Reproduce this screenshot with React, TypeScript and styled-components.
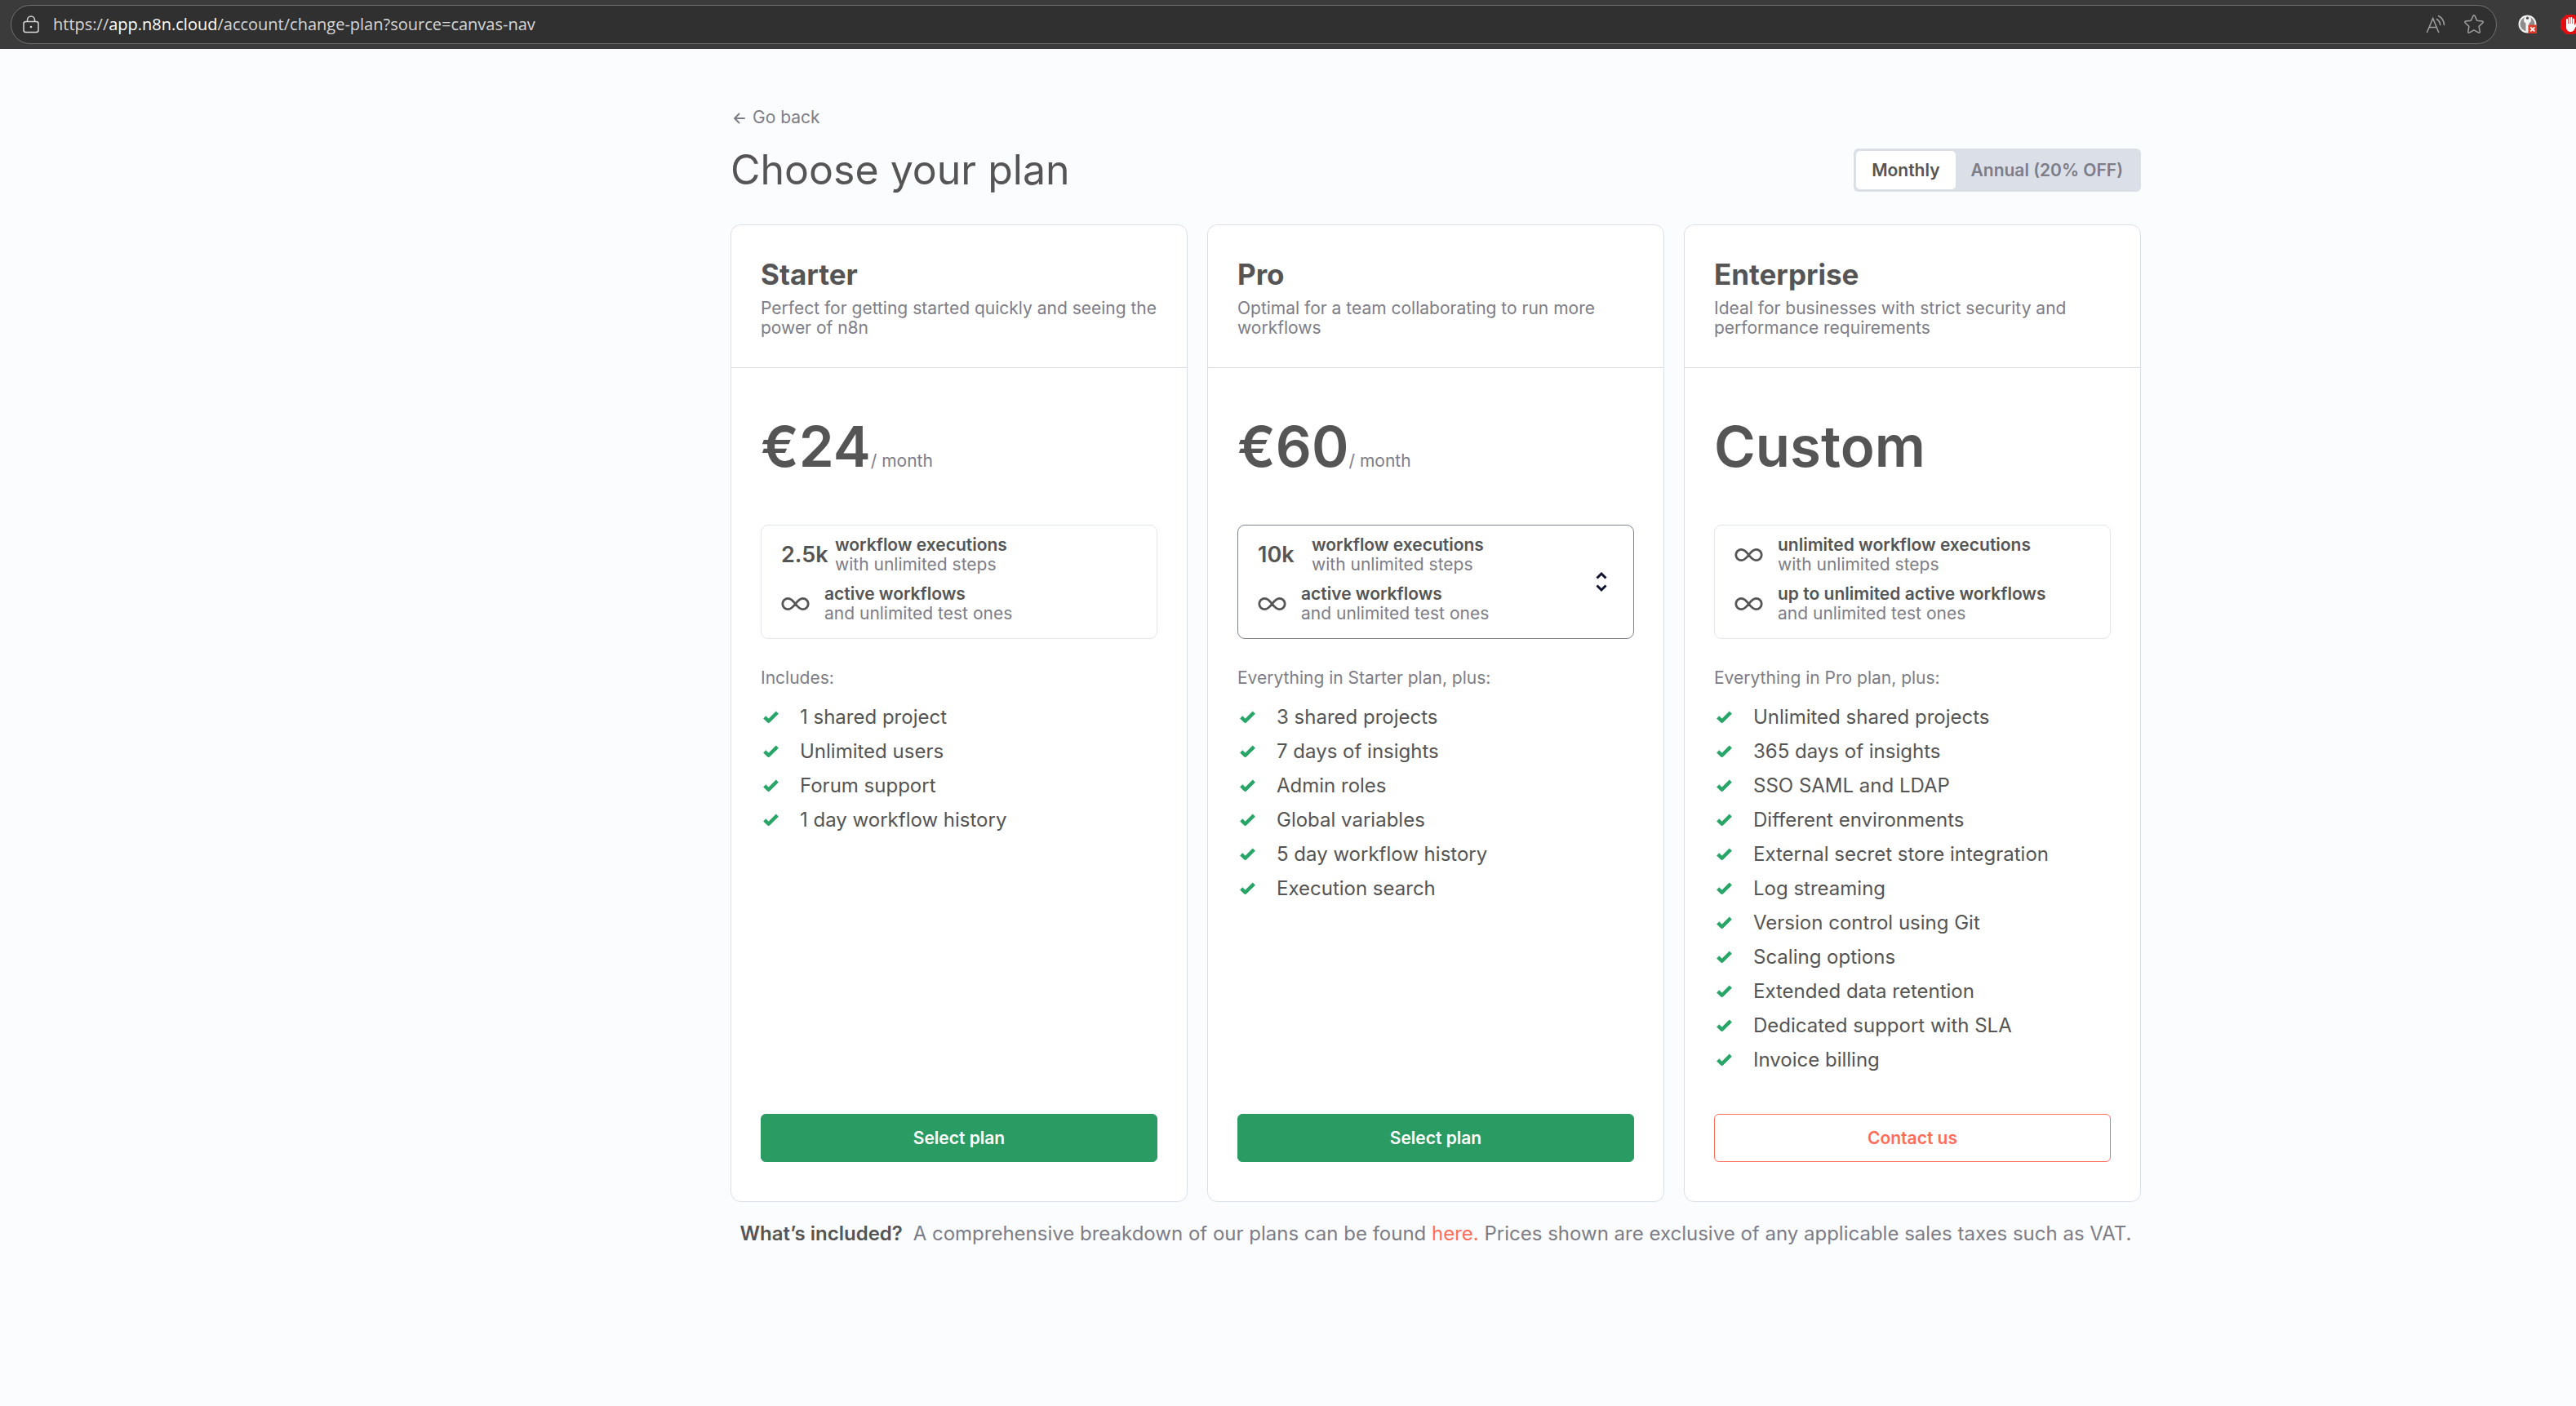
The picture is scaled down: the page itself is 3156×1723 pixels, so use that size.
import React, { useState } from "react";
import styled, { createGlobalStyle, css } from "styled-components";

const GlobalStyle = createGlobalStyle`
  *, *::before, *::after { box-sizing: border-box; }
  html, body, #root { min-height: 100vh; }
  body {
    margin: 0;
    background: #fbfcfe;
    color: #555555;
    font-family: Inter, "Liberation Sans", sans-serif;
    font-size: 21px;
    line-height: 24px;
  }
  h1, h2, p, ul { margin: 0; padding: 0; }
  button { font: inherit; color: inherit; }
`;

/* Browser bar */

const BrowserBar = styled.header`
  display: flex;
  align-items: center;
  height: 60px;
  padding-left: 13px;
  background: #3b3b3b;
  overflow: hidden;
`;

const AddressField = styled.div`
  flex: 1;
  min-width: 0;
  display: flex;
  align-items: center;
  gap: 17px;
  height: 48px;
  padding: 0 14px;
  border: 1px solid #707070;
  border-radius: 24px;
  background: #303030;
  color: #d6d6d6;
`;

const Url = styled.div`
  flex: 1;
  font-family: "Open Sans", "Noto Sans", sans-serif;
  font-size: 20px;
  line-height: 30px;
  white-space: nowrap;

  b {
    font-weight: 400;
    color: #ffffff;
  }
`;

const BarButton = styled.button`
  display: flex;
  padding: 0;
  border: 0;
  background: none;
  color: #a0a0a0;
`;

const FieldActions = styled.div`
  display: flex;
  align-items: center;
  gap: 22px;
`;

const Extensions = styled.div`
  flex: none;
  display: flex;
  align-items: center;
  gap: 28px;
  width: 97px;
  padding-left: 26px;
  overflow: hidden;

  svg {
    flex: none;
  }
`;

/* Page */

const Page = styled.div`
  display: grid;
  grid-template-columns: 895fr minmax(0, 1728px) 533fr;
  padding: 72px 0;
`;

const Main = styled.main`
  grid-column: 2;
`;

const BackLink = styled.a`
  display: inline-flex;
  align-items: center;
  gap: 8px;
  padding-left: 3px;
  color: #7d7d87;
  text-decoration: none;
  vertical-align: top;
`;

const TitleRow = styled.div`
  display: flex;
  align-items: center;
  justify-content: space-between;
  margin: 26px 0 40px;
`;

const Title = styled.h1`
  font-size: 50px;
  font-weight: 400;
  line-height: 53px;
`;

const Toggle = styled.fieldset`
  display: flex;
  margin: 0;
  padding: 3px;
  border: 0;
  border-radius: 6px;
  background: #dbdfe7;
`;

const ToggleOption = styled.label<{ $active: boolean }>`
  position: relative;
  padding: 0 19px;
  border-radius: 5px;
  background: ${(p) => (p.$active ? "#ffffff" : "transparent")};
  color: ${(p) => (p.$active ? "#555555" : "#7d7d87")};
  font-weight: 600;
  line-height: 47px;
  cursor: pointer;

  input {
    position: absolute;
    inset: 0;
    margin: 0;
    opacity: 0;
  }
`;

const Plans = styled.div`
  display: grid;
  grid-template-columns: repeat(3, minmax(0, 1fr));
  gap: 24px;
`;

const Card = styled.section`
  display: flex;
  flex-direction: column;
  border: 1px solid #dbdfe7;
  border-radius: 12px;
  background: #ffffff;
`;

const CardHeader = styled.div`
  padding: 36px;
  border-bottom: 1px solid #dbdfe7;
`;

const PlanName = styled.h2`
  margin-bottom: 6px;
  font-size: 35px;
  font-weight: 700;
  line-height: 48px;
`;

const Muted = styled.p`
  color: #7d7d87;
`;

const CardBody = styled.div`
  flex: 1;
  display: flex;
  flex-direction: column;
  padding: 36px 36px 48px;
`;

const Price = styled.div`
  display: flex;
  align-items: baseline;
  height: 120px;
  margin-bottom: 36px;
  font-size: 69px;
  font-weight: 600;
  line-height: 120px;

  small {
    color: #7d7d87;
    font-size: 21px;
    font-weight: 400;
    line-height: 24px;
  }
`;

const limitBox = css`
  display: flex;
  align-items: center;
  justify-content: space-between;
  width: 100%;
  margin-bottom: 36px;
  padding: 0 32px 0 24px;
  border-radius: 9px;
  background: #ffffff;
  text-align: left;
`;

const LimitPanel = styled.div`
  ${limitBox}
  border: 1px solid #e3e5ec;
`;

const LimitPicker = styled.button`
  ${limitBox}
  border: 1px solid #7d838f;
`;

const LimitRows = styled.span`
  display: grid;
  gap: 12px;
  padding: 12px 0 18px;
`;

const LimitRow = styled.span`
  display: flex;
  align-items: center;
`;

const Quantity = styled.span<{ $wide: boolean }>`
  display: flex;
  width: ${(p) => (p.$wide ? 66 : 53)}px;
  font-size: 27px;
  font-weight: 600;
`;

const LimitText = styled.span`
  display: grid;
  color: #7d7d87;

  strong {
    color: #555555;
    font-weight: 600;
  }
`;

const Features = styled.ul`
  flex: 1;
  margin: 15px 0 45px;
  list-style: none;
  font-size: 24px;
`;

const Feature = styled.li`
  display: flex;
  align-items: center;
  gap: 26px;
  padding-left: 3px;
  line-height: 42px;

  svg {
    flex: none;
  }
`;

const ActionButton = styled.button<{ $outline: boolean }>`
  height: 59px;
  border: 1px solid ${(p) => (p.$outline ? "#ff6d5a" : "#299b63")};
  border-radius: 6px;
  background: ${(p) => (p.$outline ? "#ffffff" : "#299b63")};
  color: ${(p) => (p.$outline ? "#ff6d5a" : "#ffffff")};
  font-weight: 600;
  cursor: pointer;
`;

const Note = styled.p`
  margin-top: 24px;
  color: #7d7d87;
  font-size: 24px;
  line-height: 30px;
  text-align: center;

  strong {
    margin-right: 6px;
    color: #555555;
    font-weight: 600;
  }

  a {
    color: #ff6d5a;
    text-decoration: none;
  }
`;

/* Drawings */

const LockIcon = () => (
  <svg width="20" height="22" viewBox="0 0 20 22" fill="none" stroke="#d6d6d6" strokeWidth="1.5">
    <rect x="1" y="7.5" width="18" height="13" rx="2.5" />
    <path d="M5.5 7.5V5.5a4.5 4.5 0 0 1 9 0v2" />
    <circle cx="10" cy="14" r="1.3" fill="#d6d6d6" stroke="none" />
  </svg>
);

const ReadAloudIcon = () => (
  <svg width="24" height="24" viewBox="0 0 24 24" fill="none" stroke="currentColor" strokeWidth="1.5" strokeLinecap="round">
    <path d="M1.5 21.5 8.7 4.5l7 17M4 15.5h9.2" />
    <path d="M13.5 5.5a9 9 0 0 1 4.2 7M15.5 1.5a13 13 0 0 1 7 11" />
  </svg>
);

const StarIcon = () => (
  <svg width="26" height="26" viewBox="0 0 26 26" fill="none" stroke="currentColor" strokeWidth="1.5" strokeLinejoin="round">
    <path d="M12.1 2.2a1 1 0 0 1 1.8 0l2.8 6 6.7.9a1 1 0 0 1 .5 1.7l-4.8 4.6 1.2 6.7a1 1 0 0 1-1.4 1L13 19.9l-5.9 3.2a1 1 0 0 1-1.4-1l1.2-6.7-4.8-4.6a1 1 0 0 1 .5-1.7l6.7-.9z" />
  </svg>
);

const KeyExtensionIcon = () => (
  <svg width="24" height="24" viewBox="0 0 24 24">
    <circle cx="11.5" cy="11.5" r="10" fill="#8d8d8d" stroke="#f2f2f2" strokeWidth="2" />
    <path d="M11.5 2a4.5 4.5 0 0 1 2 8.5v9l-2 2.5-2-2.5v-9a4.5 4.5 0 0 1 2-8.5z" fill="#f4f4f4" />
    <circle cx="11.5" cy="4.2" r="1.6" fill="#4a4a4a" />
    <rect x="12.5" y="12.5" width="10.5" height="10.5" fill="#dd3a2a" />
    <path d="M15.3 15.3l5 5M20.3 15.3l-5 5" stroke="#ffffff" strokeWidth="1.8" />
  </svg>
);

const BlockerIcon = () => (
  <svg width="24" height="24" viewBox="0 0 24 24">
    <path d="M7 0h10l7 7v10l-7 7H7l-7-7V7z" fill="#e40d12" />
    <path d="M8 12V6M10.7 11V4M13.4 11V4M16.1 12V5.5" stroke="#ffffff" strokeWidth="2" strokeLinecap="round" />
    <path d="M7 11h10v2l1.8-2.5c.8-.8 2 0 1.6 1L17 18c-1 2-2.5 3-4.500 3C9 21 7 18.5 7 15z" fill="#ffffff" />
  </svg>
);

const BackArrow = () => (
  <svg width="16" height="16" viewBox="0 0 16 16" fill="none" stroke="currentColor" strokeWidth="2" strokeLinecap="round" strokeLinejoin="round">
    <path d="M14 9H2M7.5 3.5 2 9l5.5 5.5" />
  </svg>
);

const CheckIcon = () => (
  <svg width="19" height="16" viewBox="0 0 19 16" fill="none" stroke="#29a568" strokeWidth="4.4" strokeLinejoin="round">
    <path d="M1.7 7.9l4.9 4.9L17.3 2.1" />
  </svg>
);

const UnlimitedIcon = () => (
  <svg width="35" height="18" viewBox="0 0 35 18" fill="none" stroke="#555555" strokeWidth="2.8" role="img" aria-label="unlimited">
    <path d="M17.5 9C14.5 5 12 2.3 8.5 2.3a6.7 6.7 0 0 0 0 13.4C12 15.7 14.5 13 17.5 9s5.500-6.700 9-6.700a6.700 6.700 0 0 1 0 13.400C23 15.700 20.500 13 17.500 9z" />
  </svg>
);

const UpDown = () => (
  <svg width="14" height="26" viewBox="0 0 14 26" fill="none" stroke="#101330" strokeWidth="3">
    <path d="M1.5 8.5 7 3l5.5 5.5M1.5 17.5 7 23l5.5-5.5" />
  </svg>
);

/* Content */

type Limit = { quantity?: string; title: string; detail: string };

type Plan = {
  name: string;
  description: string;
  price: string;
  period?: string;
  limits: Limit[];
  adjustable?: boolean;
  intro: string;
  features: string[];
  action: string;
  outline?: boolean;
};

const plans: Plan[] = [
  {
    name: "Starter",
    description: "Perfect for getting started quickly and seeing the power of n8n",
    price: "€24",
    period: "/ month",
    limits: [
      { quantity: "2.5k", title: "workflow executions", detail: "with unlimited steps" },
      { title: "active workflows", detail: "and unlimited test ones" },
    ],
    intro: "Includes:",
    features: ["1 shared project", "Unlimited users", "Forum support", "1 day workflow history"],
    action: "Select plan",
  },
  {
    name: "Pro",
    description: "Optimal for a team collaborating to run more workflows",
    price: "€60",
    period: "/ month",
    limits: [
      { quantity: "10k", title: "workflow executions", detail: "with unlimited steps" },
      { title: "active workflows", detail: "and unlimited test ones" },
    ],
    adjustable: true,
    intro: "Everything in Starter plan, plus:",
    features: [
      "3 shared projects",
      "7 days of insights",
      "Admin roles",
      "Global variables",
      "5 day workflow history",
      "Execution search",
    ],
    action: "Select plan",
  },
  {
    name: "Enterprise",
    description: "Ideal for businesses with strict security and performance requirements",
    price: "Custom",
    limits: [
      { title: "unlimited workflow executions", detail: "with unlimited steps" },
      { title: "up to unlimited active workflows", detail: "and unlimited test ones" },
    ],
    intro: "Everything in Pro plan, plus:",
    features: [
      "Unlimited shared projects",
      "365 days of insights",
      "SSO SAML and LDAP",
      "Different environments",
      "External secret store integration",
      "Log streaming",
      "Version control using Git",
      "Scaling options",
      "Extended data retention",
      "Dedicated support with SLA",
      "Invoice billing",
    ],
    action: "Contact us",
    outline: true,
  },
];

const billingOptions = ["Monthly", "Annual (20% OFF)"];

const Limits = ({ limits }: { limits: Limit[] }) => (
  <LimitRows>
    {limits.map((limit) => (
      <LimitRow key={limit.title}>
        <Quantity $wide={Boolean(limit.quantity)}>{limit.quantity ?? <UnlimitedIcon />}</Quantity>
        <LimitText>
          <strong>{limit.title}</strong>
          <span>{limit.detail}</span>
        </LimitText>
      </LimitRow>
    ))}
  </LimitRows>
);

const PlanCard = ({ plan }: { plan: Plan }) => (
  <Card>
    <CardHeader>
      <PlanName>{plan.name}</PlanName>
      <Muted>{plan.description}</Muted>
    </CardHeader>
    <CardBody>
      <Price>
        {plan.price}
        {plan.period && <small>{plan.period}</small>}
      </Price>
      {plan.adjustable ? (
        <LimitPicker type="button" aria-haspopup="listbox">
          <Limits limits={plan.limits} />
          <UpDown />
        </LimitPicker>
      ) : (
        <LimitPanel>
          <Limits limits={plan.limits} />
        </LimitPanel>
      )}
      <Muted>{plan.intro}</Muted>
      <Features>
        {plan.features.map((feature) => (
          <Feature key={feature}>
            <CheckIcon />
            {feature}
          </Feature>
        ))}
      </Features>
      <ActionButton type="button" $outline={Boolean(plan.outline)}>
        {plan.action}
      </ActionButton>
    </CardBody>
  </Card>
);

export default function App() {
  const [billing, setBilling] = useState(billingOptions[0]);

  return (
    <>
      <GlobalStyle />
      <BrowserBar>
        <AddressField>
          <LockIcon />
          <Url>
            https://<b>app.n8n.cloud</b>/account/change-plan?source=canvas-nav
          </Url>
          <FieldActions>
            <BarButton type="button" aria-label="Read aloud">
              <ReadAloudIcon />
            </BarButton>
            <BarButton type="button" aria-label="Add to favourites">
              <StarIcon />
            </BarButton>
          </FieldActions>
        </AddressField>
        <Extensions>
          <KeyExtensionIcon />
          <BlockerIcon />
        </Extensions>
      </BrowserBar>
      <Page>
        <Main>
          <BackLink href="#back">
            <BackArrow />
            Go back
          </BackLink>
          <TitleRow>
            <Title>Choose your plan</Title>
            <Toggle aria-label="Billing period">
              {billingOptions.map((option) => (
                <ToggleOption key={option} $active={billing === option}>
                  <input
                    type="radio"
                    name="billing"
                    checked={billing === option}
                    onChange={() => setBilling(option)}
                  />
                  {option}
                </ToggleOption>
              ))}
            </Toggle>
          </TitleRow>
          <Plans>
            {plans.map((plan) => (
              <PlanCard key={plan.name} plan={plan} />
            ))}
          </Plans>
          <Note>
            <strong>What’s included?</strong> A comprehensive breakdown of our plans can be found{" "}
            <a href="#plans">here.</a> Prices shown are exclusive of any applicable sales taxes such as VAT.
          </Note>
        </Main>
      </Page>
    </>
  );
}
